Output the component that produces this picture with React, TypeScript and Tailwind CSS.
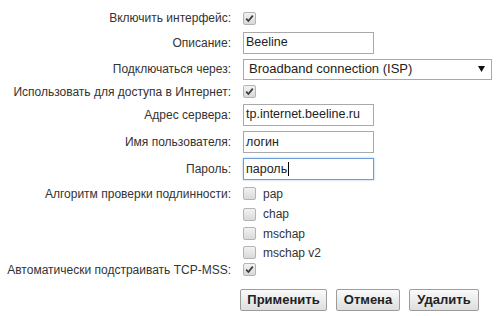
import React from "react";

const Cb = ({ checked = false }: { checked?: boolean }) => (
  <span className="flex h-[13px] w-[13px] items-center justify-center rounded-[2px] border border-[#b4b4b4] bg-linear-to-b from-[#f2f2f2] to-[#d9d9d9]">
    {checked && (
      <svg width="9" height="9" viewBox="0 0 9 9">
        <path d="M1.2 4.6 L3.4 7 L7.8 1.6" stroke="#3a3a3a" strokeWidth="1.7" fill="none" />
      </svg>
    )}
  </span>
);

const Row = ({ h, label, children }: { h: string; label: string; children?: React.ReactNode }) => (
  <div className={`flex items-center ${h}`}>
    <div className="w-[231px] text-right text-[12px] leading-none text-[#333]">{label}</div>
    <div className="ml-[12px] flex items-center">{children}</div>
  </div>
);

const Field = ({ value, focus = false }: { value: string; focus?: boolean }) => (
  <div
    className={`flex h-[22px] w-[131px] items-center border px-[2px] text-[12.5px] text-[#222] ${
      focus ? "border-[#6f9fd6] shadow-[0_0_2px_#9cc2ee]" : "border-[#a9a9a9]"
    }`}
  >
    <span>{value}</span>
    {focus && <span className="ml-px inline-block h-[14px] w-px bg-black" />}
  </div>
);

const Opt = ({ h, label }: { h: string; label: string }) => (
  <div className={`flex items-center ${h}`}>
    <Cb />
    <span className="ml-[7px] text-[12px] leading-none text-[#333]">{label}</span>
  </div>
);

const Btn = ({ label, w }: { label: string; w: string }) => (
  <div
    className={`flex h-[22px] ${w} items-center justify-center rounded-[2px] border border-[#9c9c9c] bg-linear-to-b from-[#fafafa] to-[#dedede] text-[13px] font-bold text-[#222]`}
  >
    {label}
  </div>
);

export default function App() {
  return (
    <div className="h-[316px] w-[498px] bg-white pt-[6px] font-['Liberation_Sans',Arial,sans-serif]">
      <Row h="h-[24px]" label="Включить интерфейс:">
        <Cb checked />
      </Row>
      <Row h="h-[25px]" label="Описание:">
        <Field value="Beeline" />
      </Row>
      <Row h="h-[28px]" label="Подключаться через:">
        <div className="flex h-[21px] w-[249px] items-center justify-between border border-[#a9a9a9] pl-[5px] pr-[6px] text-[13px] text-[#222]">
          <span>Broadband connection (ISP)</span>
          <svg width="7" height="6" viewBox="0 0 7 6">
            <path d="M0 0 H7 L3.5 6 Z" fill="#111" />
          </svg>
        </div>
      </Row>
      <Row h="h-[17px]" label="Использовать для доступа в Интернет:">
        <Cb checked />
      </Row>
      <Row h="h-[29px]" label="Адрес сервера:">
        <Field value="tp.internet.beeline.ru" />
      </Row>
      <Row h="h-[26px]" label="Имя пользователя:">
        <Field value="логин" />
      </Row>
      <Row h="h-[28px]" label="Пароль:">
        <Field value="пароль" focus />
      </Row>
      <div className="flex">
        <div className="flex h-[21px] w-[231px] items-center justify-end text-[12px] leading-none text-[#333]">
          Алгоритм проверки подлинности:
        </div>
        <div className="ml-[12px] flex flex-col">
          <Opt h="h-[21px]" label="pap" />
          <Opt h="h-[20px]" label="chap" />
          <Opt h="h-[19px]" label="mschap" />
          <Opt h="h-[19px]" label="mschap v2" />
        </div>
      </div>
      <Row h="h-[15px]" label="Автоматически подстраивать TCP-MSS:">
        <Cb checked />
      </Row>
      <div className="mt-[12px] flex gap-[9px] pl-[240px]">
        <Btn label="Применить" w="w-[87px]" />
        <Btn label="Отмена" w="w-[64px]" />
        <Btn label="Удалить" w="w-[70px]" />
      </div>
    </div>
  );
}
